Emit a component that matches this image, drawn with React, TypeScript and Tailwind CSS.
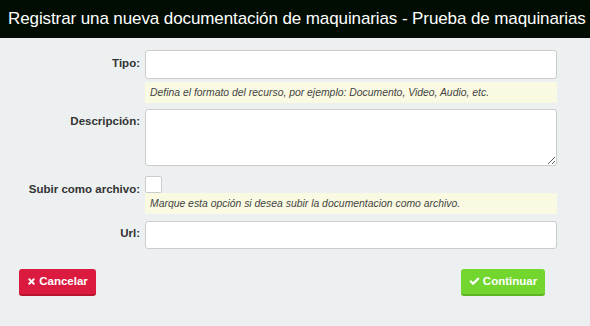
import React from "react";
import { X, Check } from "lucide-react";

const font = { fontFamily: '"Liberation Sans", Arial, sans-serif' };

function Label({ children, className = "" }: { children: React.ReactNode; className?: string }) {
    return (
        <label className={"text-right text-[11.5px] font-bold text-[#333] leading-[14px] whitespace-nowrap " + className}>
            {children}
        </label>
    );
}

function Help({ children }: { children: React.ReactNode }) {
    return (
        <div className="col-start-2 h-[21px] bg-[#fafae3] pl-[5px] flex items-center text-[10.4px] italic text-[#444] whitespace-nowrap">
            {children}
        </div>
    );
}

export default function App() {
    return (
        <div className="w-[590px] h-[326px] bg-[#ecf0f1] overflow-hidden" style={font}>
            {/* Encabezado */}
            <div className="h-[38px] bg-[#010d03] flex items-center pl-[8px] text-white text-[17px] tracking-[-0.1px] whitespace-nowrap">
                Registrar una nueva documentación de maquinarias - Prueba de maquinarias
            </div>

            <form className="pt-[12px]" onSubmit={(e) => e.preventDefault()}>
                <div className="grid grid-cols-[140px_412px] gap-x-[5px]">
                    <Label className="pt-[6px]">Tipo:</Label>
                    <input
                        type="text"
                        className="h-[29px] bg-white border border-[#ccc] rounded-[3px] outline-none"
                    />
                    <div className="col-start-2 h-[3px]" />
                    <Help>Defina el formato del recurso, por ejemplo: Documento, Video, Audio, etc.</Help>

                    <div className="col-span-2 h-[6px]" />
                    <Label className="pt-[5px]">Descripción:</Label>
                    <textarea className="h-[57px] bg-white border border-[#ccc] rounded-[3px] outline-none block" />

                    <div className="col-span-2 h-[10px]" />
                    <Label className="pt-[6px] h-[17px]">Subir como archivo:</Label>
                    <div className="h-[17px]">
                        <span className="block w-[17px] h-[17px] bg-white border border-[#ccc] rounded-[2px]" />
                    </div>
                    <Help>Marque esta opción si desea subir la documentacion como archivo.</Help>

                    <div className="col-span-2 h-[7px]" />
                    <Label className="pt-[5px]">Url:</Label>
                    <input
                        type="text"
                        className="h-[28px] bg-white border border-[#ccc] rounded-[3px] outline-none"
                    />
                </div>

                <div className="flex justify-between pl-[19px] pr-[45px] mt-[20px]">
                    <button
                        type="button"
                        className="h-[27px] w-[77px] rounded-[3px] bg-[#da1b3f] border-b-2 border-[#b8142f] text-white text-[11.5px] font-bold flex items-center justify-center gap-[3px]"
                    >
                        <X size={9} strokeWidth={5} />
                        Cancelar
                    </button>
                    <button
                        type="submit"
                        className="h-[27px] w-[84px] rounded-[3px] bg-[#72d62e] border-b-2 border-[#5cb520] text-white text-[11.5px] font-bold flex items-center justify-center gap-[3px]"
                    >
                        <Check size={11} strokeWidth={5} />
                        Continuar
                    </button>
                </div>
            </form>
        </div>
    );
}
